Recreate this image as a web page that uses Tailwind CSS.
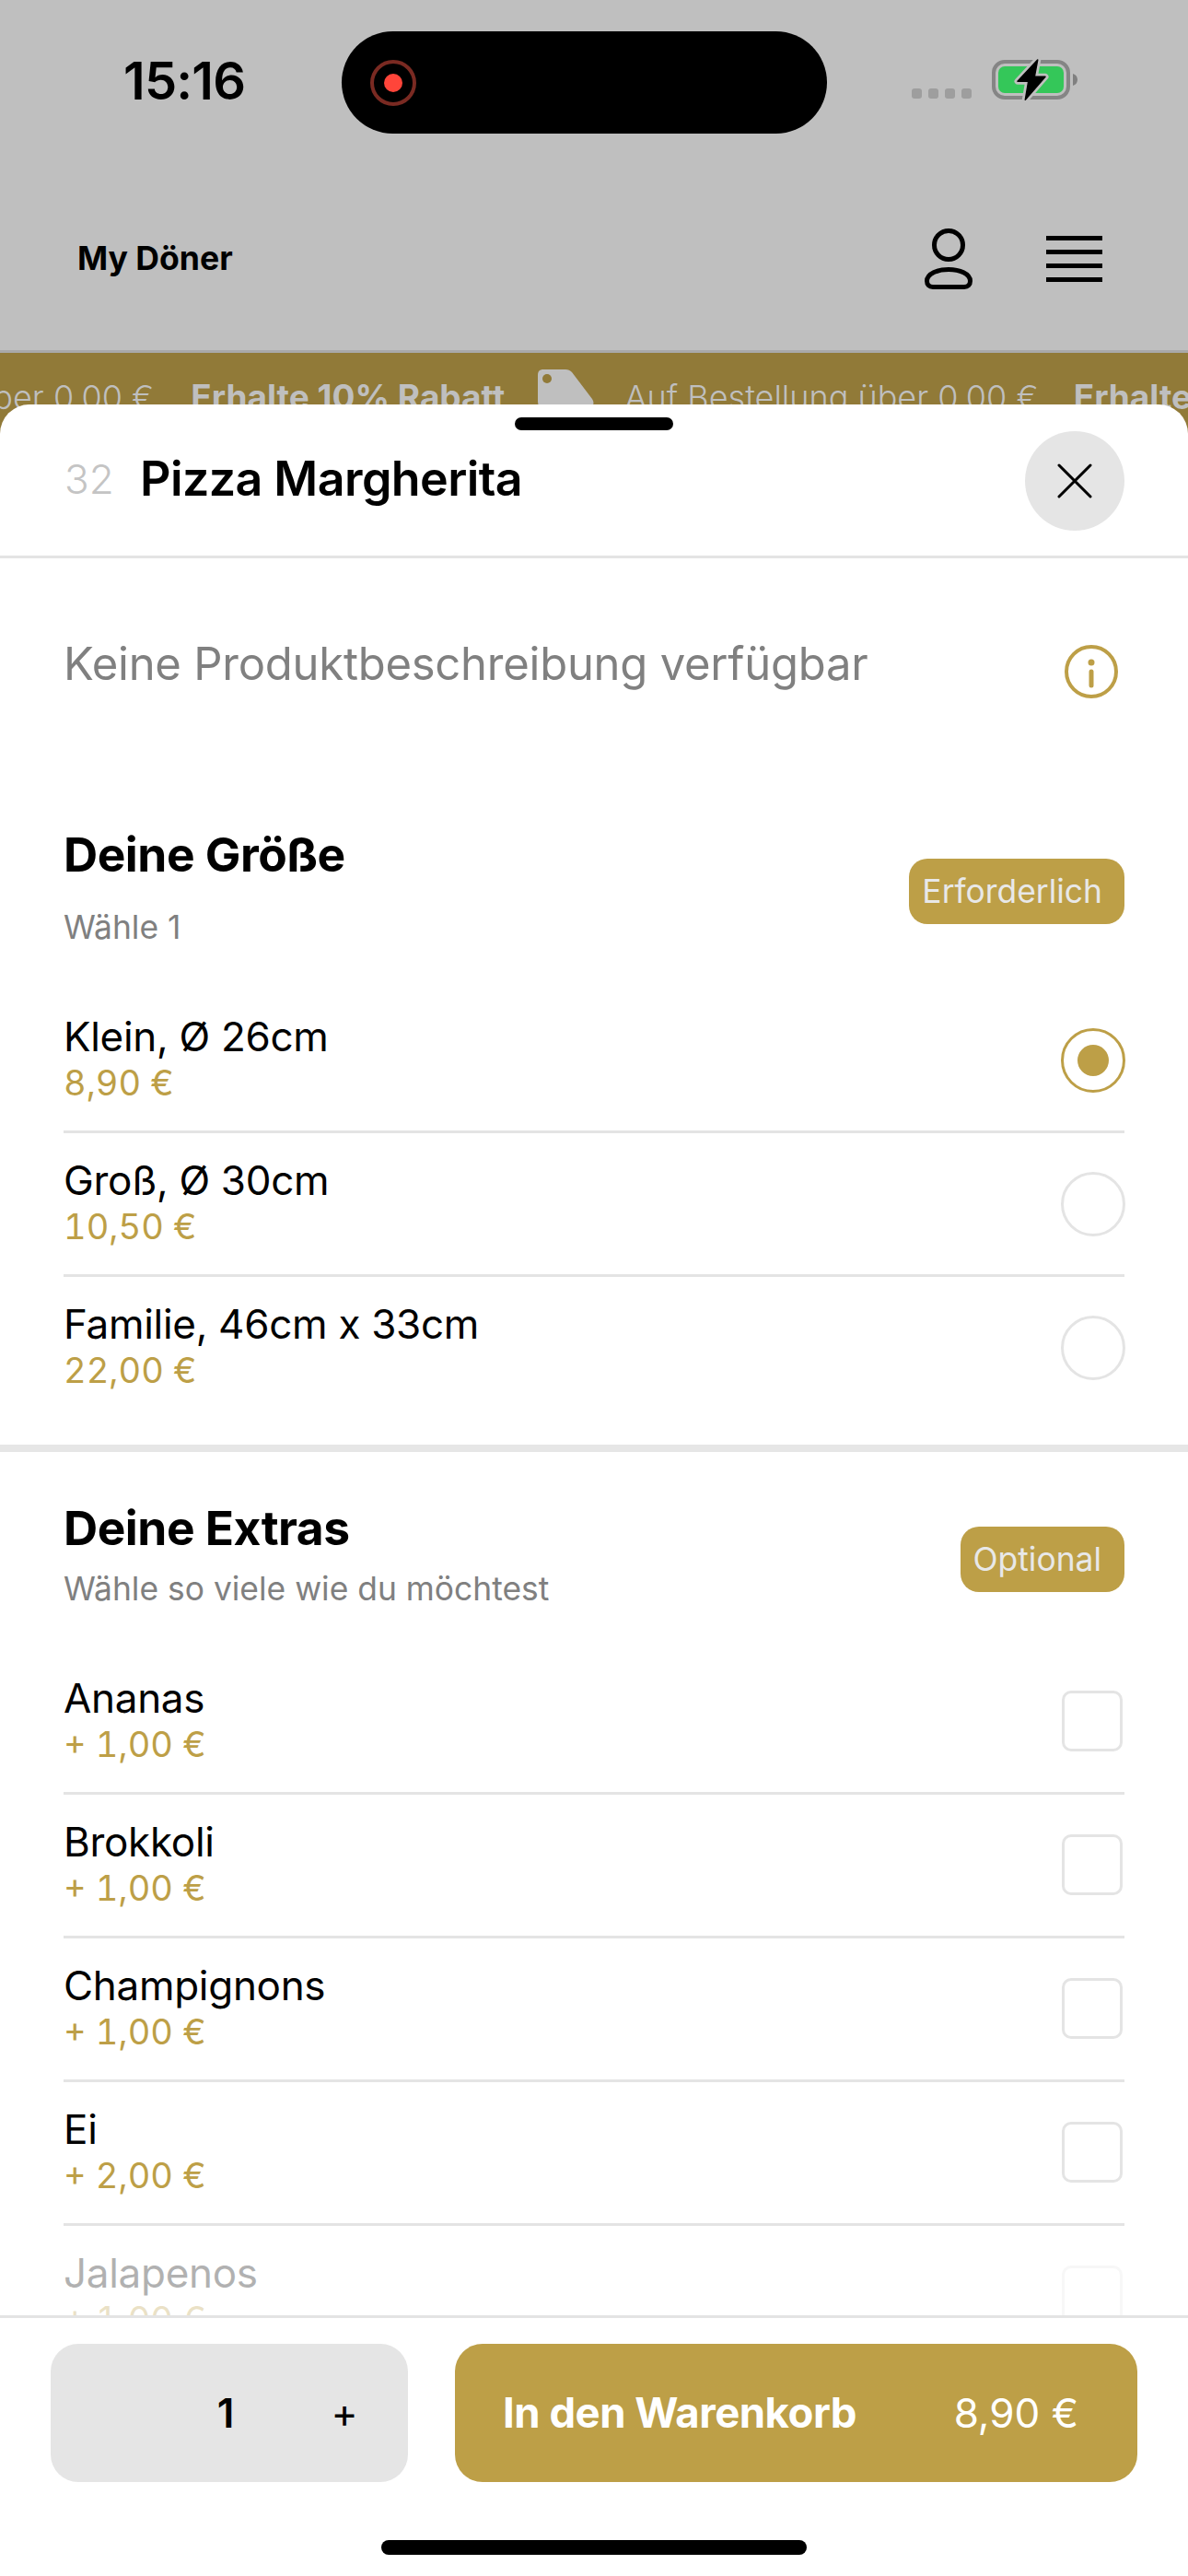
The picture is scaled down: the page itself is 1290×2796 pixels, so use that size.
<!DOCTYPE html>
<html lang="de">
<head>
  <meta charset="UTF-8" />
  <meta name="viewport" content="width=device-width, initial-scale=1" />
  <title>My Döner | Pizza Margherita</title>
  <script src="https://cdn.jsdelivr.net/npm/@tailwindcss/browser@4"></script>
</head>
<body class="h-[2796px] w-[1290px] overflow-hidden bg-white flex flex-col font-[Inter,sans-serif] text-black">

  <!-- Dimmed page header -->
  <header class="h-[380px] shrink-0 bg-[#bfbfbf] pt-[34px]">
    <div class="flex items-start">
      <div class="w-[371px] pl-[134px] text-[56px] leading-[108px] font-semibold tracking-[-0.8px]">15:16</div>
      <div class="w-[527px] h-[111px] rounded-[56px] bg-black flex items-center pl-[31px]">
        <div class="w-[50px] h-[50px] rounded-full border-4 border-[#7a2a22] flex items-center justify-center">
          <div class="w-[20px] h-[20px] rounded-full bg-[#ff453a]"></div>
        </div>
      </div>
      <div class="ml-[92px] mt-[62px] flex gap-[7px]">
        <div class="w-[11px] h-[11px] rounded-[3px] bg-[#9e9e9e]"></div>
        <div class="w-[11px] h-[11px] rounded-[3px] bg-[#9e9e9e]"></div>
        <div class="w-[11px] h-[11px] rounded-[3px] bg-[#9e9e9e]"></div>
        <div class="w-[11px] h-[11px] rounded-[3px] bg-[#9e9e9e]"></div>
      </div>
      <svg class="ml-[22px] mt-[28px]" width="93" height="48" viewBox="0 0 93 48">
        <rect x="2" y="5" width="81" height="39" rx="12" fill="none" stroke="#858585" stroke-width="4" />
        <rect x="7" y="10" width="71" height="29" rx="7" fill="#34c759" />
        <path d="M88 18C91 19 93 21 93 24.5C93 28 91 30 88 31Z" fill="#808080" />
        <path d="M49.7 3L28 26.3H39.7L36.3 46.3L58 21.3H46.3Z" fill="#000" stroke="#bfbfbf" stroke-width="7" stroke-linejoin="round" />
        <path d="M49.7 3L28 26.3H39.7L36.3 46.3L58 21.3H46.3Z" fill="#000" stroke="#000" stroke-width="1.5" stroke-linejoin="round" />
      </svg>
    </div>
    <nav class="mt-[96px] h-[80px] flex items-center pl-[84px] pr-[93px]">
      <div class="text-[35.6px] font-bold">My Döner</div>
      <svg class="ml-auto" width="52" height="66" viewBox="0 0 52 66" fill="none" stroke="#000" stroke-width="5">
        <circle cx="26" cy="18" r="15.5" />
        <path d="M26 44.5C38 44.5 49.5 49 49.5 57C49.5 61 47 63.5 43 63.5H9C5 63.5 2.5 61 2.5 57C2.5 49 14 44.5 26 44.5Z" />
      </svg>
      <div class="ml-[80px] w-[61px] flex flex-col gap-[10px]">
        <div class="h-[5px] bg-black"></div>
        <div class="h-[5px] bg-black"></div>
        <div class="h-[5px] bg-black"></div>
        <div class="h-[5px] bg-black"></div>
      </div>
    </nav>
  </header>

  <!-- Discount marquee, runs on under the sheet -->
  <div class="h-[91px] shrink-0 overflow-hidden bg-[#917a38] border-t-[3px] border-[#a9a9a9] pt-[26px]">
    <div class="flex items-start whitespace-nowrap text-[37px] leading-[44px] text-[#bfbfbf] ml-[-282px]">
      <span class="text-[36px] font-light">Auf Bestellung über 0,00 €</span>
      <span class="ml-[40px] font-bold">Erhalte 10% Rabatt</span>
      <svg class="ml-[36px] mt-[-8px] shrink-0" width="62" height="60" viewBox="0 0 62 60">
        <path d="M6 0H30C33 0 35 1 37 3L59 32C61 35 61 38 59 40L42 56C39 59 35 59 32 57L6 44C2 42 0 39 0 35V6C0 2 2 0 6 0Z" fill="#bfbfbf" />
        <circle cx="10" cy="10" r="5" fill="#917a38" />
      </svg>
      <span class="ml-[32px] text-[36px] font-light">Auf Bestellung über 0,00 €</span>
      <span class="ml-[38px] font-bold">Erhalte 10% Rabatt</span>
    </div>
  </div>

  <!-- Product sheet -->
  <main class="relative mt-[-32px] flex-1 min-h-0 flex flex-col bg-white rounded-t-[32px]">
    <div class="h-[167px] shrink-0 border-b-[3px] border-[#e4e4e4] relative flex items-center pl-[70px] pr-[70px] pb-[2px]">
      <div class="absolute top-[14px] left-[559px] w-[172px] h-[14px] rounded-full bg-black"></div>
      <span class="text-[44px] font-light text-[#c4c4c4] w-[82px]">32</span>
      <span class="text-[52px] font-semibold tracking-[-0.6px]">Pizza Margherita</span>
      <button class="ml-auto mr-[-1px] mt-[3px] w-[108px] h-[108px] rounded-full bg-[#e5e5e5] flex items-center justify-center">
        <svg width="38" height="38" viewBox="0 0 38 38" fill="none" stroke="#000" stroke-width="3" stroke-linecap="round"><path d="M2 2L36 36M36 2L2 36" /></svg>
      </button>
    </div>

    <div class="flex-1 min-h-0 overflow-hidden">
      <!-- Description and size -->
      <section class="pl-[69px] pr-[69px] pt-[85px] h-[970px] border-b-[8px] border-[#e6e6e6]">
        <div class="flex justify-between">
          <p class="text-[49px] leading-[60px] text-[#808080] tracking-[-0.25px]">Keine Produktbeschreibung verfügbar</p>
          <svg class="mt-[9px] mr-[7px]" width="58" height="58" viewBox="0 0 58 58" fill="none" stroke="#bd9f47">
            <circle cx="29" cy="29" r="27" stroke-width="4" />
            <circle cx="29" cy="19" r="3.5" fill="#bd9f47" stroke="none" />
            <path d="M29 29V44" stroke-width="5" stroke-linecap="round" />
          </svg>
        </div>
        <div class="mt-[139px] flex items-center justify-between">
          <div>
            <h2 class="text-[51.5px] leading-[60px] font-bold tracking-[-0.5px]">Deine Größe</h2>
            <p class="mt-[28px] text-[35.4px] leading-[44px] text-[#808080]">Wähle 1</p>
          </div>
          <span class="mt-[8px] h-[71px] pl-[14px] pr-[24px] rounded-[20px] bg-[#bd9f47] text-[35.4px] leading-[71px] text-[#e8e8e8]">Erforderlich</span>
        </div>
        <div class="mt-[45px]">
          <label class="flex items-center justify-between pt-[26px] pb-[28px] border-b-[3px] border-[#e4e4e4]">
            <div>
              <div class="text-[44px] leading-[50px] tracking-[-0.3px]">Klein, Ø 26cm</div>
              <div class="mt-[1px] text-[38px] leading-[48px] text-[#bd9f47] tabular-nums">8,90 €</div>
            </div>
            <div class="mt-[2px] mr-[-1px] w-[70px] h-[70px] rounded-full border-[3px] border-[#bd9f47] flex items-center justify-center">
              <div class="w-[34px] h-[34px] rounded-full bg-[#bd9f47]"></div>
            </div>
          </label>
          <label class="flex items-center justify-between pt-[26px] pb-[28px] border-b-[3px] border-[#e4e4e4]">
            <div>
              <div class="text-[44px] leading-[50px] tracking-[-0.3px]">Groß, Ø 30cm</div>
              <div class="mt-[1px] text-[38px] leading-[48px] text-[#bd9f47] tabular-nums">10,50 €</div>
            </div>
            <div class="mt-[2px] mr-[-1px] w-[70px] h-[70px] rounded-full border-[3px] border-[#e4e4e4]"></div>
          </label>
          <label class="flex items-center justify-between pt-[26px] pb-[28px]">
            <div>
              <div class="text-[44px] leading-[50px] tracking-[-0.3px]">Familie, 46cm x 33cm</div>
              <div class="mt-[1px] text-[38px] leading-[48px] text-[#bd9f47] tabular-nums">22,00 €</div>
            </div>
            <div class="mt-[2px] mr-[-1px] w-[70px] h-[70px] rounded-full border-[3px] border-[#e4e4e4]"></div>
          </label>
        </div>
      </section>

      <!-- Extras -->
      <section class="pl-[69px] pr-[69px] pt-[52px]">
        <div class="flex items-center justify-between">
          <div>
            <h2 class="text-[51.5px] leading-[60px] font-bold tracking-[-0.5px]">Deine Extras</h2>
            <p class="mt-[15px] text-[35.4px] leading-[44px] text-[#808080]">Wähle so viele wie du möchtest</p>
          </div>
          <span class="mt-[10px] h-[71px] pl-[14px] pr-[25px] rounded-[20px] bg-[#bd9f47] text-[35.4px] leading-[71px] text-[#e8e8e8]">Optional</span>
        </div>
        <div class="mt-[45px]">
          <label class="flex items-center justify-between pt-[26px] pb-[28px] border-b-[3px] border-[#e4e4e4]">
            <div>
              <div class="text-[44px] leading-[50px] tracking-[-0.3px]">Ananas</div>
              <div class="mt-[1px] text-[38px] leading-[48px] text-[#bd9f47] tabular-nums">+ 1,00 €</div>
            </div>
            <div class="mt-[1px] mr-[2px] w-[66px] h-[66px] rounded-[10px] border-[3px] border-[#e4e4e4]"></div>
          </label>
          <label class="flex items-center justify-between pt-[26px] pb-[28px] border-b-[3px] border-[#e4e4e4]">
            <div>
              <div class="text-[44px] leading-[50px] tracking-[-0.3px]">Brokkoli</div>
              <div class="mt-[1px] text-[38px] leading-[48px] text-[#bd9f47] tabular-nums">+ 1,00 €</div>
            </div>
            <div class="mt-[1px] mr-[2px] w-[66px] h-[66px] rounded-[10px] border-[3px] border-[#e4e4e4]"></div>
          </label>
          <label class="flex items-center justify-between pt-[26px] pb-[28px] border-b-[3px] border-[#e4e4e4]">
            <div>
              <div class="text-[44px] leading-[50px] tracking-[-0.3px]">Champignons</div>
              <div class="mt-[1px] text-[38px] leading-[48px] text-[#bd9f47] tabular-nums">+ 1,00 €</div>
            </div>
            <div class="mt-[1px] mr-[2px] w-[66px] h-[66px] rounded-[10px] border-[3px] border-[#e4e4e4]"></div>
          </label>
          <label class="flex items-center justify-between pt-[26px] pb-[28px] border-b-[3px] border-[#e4e4e4]">
            <div>
              <div class="text-[44px] leading-[50px] tracking-[-0.3px]">Ei</div>
              <div class="mt-[1px] text-[38px] leading-[48px] text-[#bd9f47] tabular-nums">+ 2,00 €</div>
            </div>
            <div class="mt-[1px] mr-[2px] w-[66px] h-[66px] rounded-[10px] border-[3px] border-[#e4e4e4]"></div>
          </label>
          <label class="flex items-center justify-between pt-[26px] pb-[28px] opacity-30">
            <div>
              <div class="text-[44px] leading-[50px] tracking-[-0.3px]">Jalapenos</div>
              <div class="mt-[1px] text-[38px] leading-[48px] text-[#bd9f47] tabular-nums">+ 1,00 €</div>
            </div>
            <div class="mt-[1px] mr-[2px] w-[66px] h-[66px] rounded-[10px] border-[3px] border-[#e4e4e4]"></div>
          </label>
        </div>
      </section>
    </div>

    <!-- Quantity and add to cart -->
    <footer class="h-[283px] shrink-0 border-t-[3px] border-[#e4e4e4] bg-white px-[55px] pt-[28px]">
      <div class="flex gap-[51px]">
        <div class="w-[388px] h-[150px] rounded-[30px] bg-[#e5e5e5] flex items-center">
          <span class="ml-[175px] w-[30px] text-center text-[44px] font-semibold">1</span>
          <span class="ml-[97px] w-[34px] text-center text-[44px]">+</span>
        </div>
        <button class="flex-1 h-[150px] rounded-[30px] bg-[#bd9f47] flex items-center justify-between pl-[52px] pr-[64px] text-white text-[44px]">
          <span class="text-[45.5px] font-bold tracking-[-0.5px]">In den Warenkorb</span>
          <span class="font-normal">8,90 €</span>
        </button>
      </div>
      <div class="mt-[63px] mx-auto w-[462px] h-[16px] rounded-full bg-black"></div>
    </footer>
  </main>
</body>
</html>
